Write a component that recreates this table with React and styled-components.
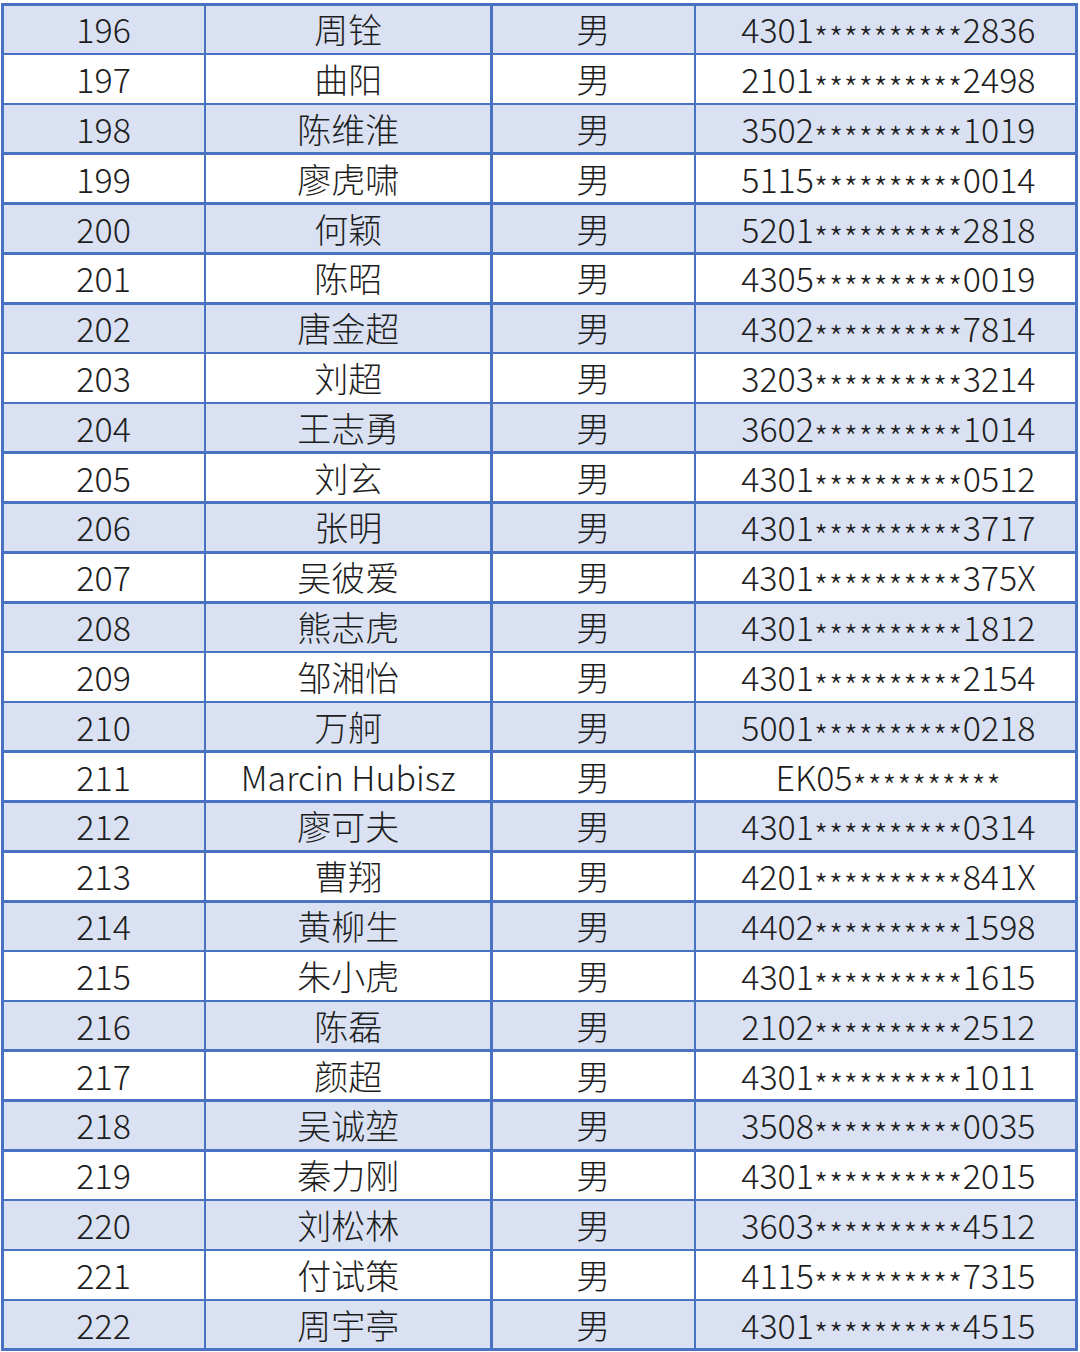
import React from "react";
import styled, { createGlobalStyle } from "styled-components";

const Global = createGlobalStyle`
  html, body { margin: 0; padding: 0; background: #ffffff; }
  body { font-family: "Noto Sans CJK SC", "Noto Sans", sans-serif; }
`;

const Page = styled.div`
  width: 1080px;
  height: 1352px;
  padding: 3px 2px 1px 1px;
  box-sizing: border-box;
`;

const Table = styled.div`
  display: flex;
  flex-direction: column;
  gap: 2.6px;
  height: 100%;
  padding: 2.6px;
  box-sizing: border-box;
  background: #4a72c2;
`;

const Row = styled.div`
  flex: 1;
  display: grid;
  grid-template-columns: 200px 284px 201px 1fr;
  gap: 2.6px;
`;

const Cell = styled.div`
  display: flex;
  align-items: center;
  justify-content: center;
  background: ${(p) => (p.$band ? "#d9e1f2" : "#ffffff")};
  color: #1e1e1e;
  font-size: 34px;
  font-weight: 300;
  line-height: 1;
  white-space: nowrap;
`;

const IdText = styled.span`
  display: inline-block;
  padding-left: 5px;
  line-height: 1;
`;

const Stars = styled.span`
  display: inline-block;
  font-size: 32px;
  letter-spacing: 0.7px;
  line-height: 0.5;
  transform: translateY(0.26em);
`;

const data = [
  ["196", "周铨", "4301", "2836"],
  ["197", "曲阳", "2101", "2498"],
  ["198", "陈维淮", "3502", "1019"],
  ["199", "廖虎啸", "5115", "0014"],
  ["200", "何颖", "5201", "2818"],
  ["201", "陈昭", "4305", "0019"],
  ["202", "唐金超", "4302", "7814"],
  ["203", "刘超", "3203", "3214"],
  ["204", "王志勇", "3602", "1014"],
  ["205", "刘玄", "4301", "0512"],
  ["206", "张明", "4301", "3717"],
  ["207", "吴彼爱", "4301", "375X"],
  ["208", "熊志虎", "4301", "1812"],
  ["209", "邹湘怡", "4301", "2154"],
  ["210", "万舸", "5001", "0218"],
  ["211", "Marcin Hubisz", "EK05", ""],
  ["212", "廖可夫", "4301", "0314"],
  ["213", "曹翔", "4201", "841X"],
  ["214", "黄柳生", "4402", "1598"],
  ["215", "朱小虎", "4301", "1615"],
  ["216", "陈磊", "2102", "2512"],
  ["217", "颜超", "4301", "1011"],
  ["218", "吴诚堃", "3508", "0035"],
  ["219", "秦力刚", "4301", "2015"],
  ["220", "刘松林", "3603", "4512"],
  ["221", "付试策", "4115", "7315"],
  ["222", "周宇亭", "4301", "4515"],
];

export default function App() {
  return (
    <Page>
      <Global />
      <Table>
        {data.map(([no, name, pre, post], i) => {
          const band = i % 2 === 0;
          return (
            <Row key={no}>
              <Cell $band={band}>{no}</Cell>
              <Cell $band={band}>{name}</Cell>
              <Cell $band={band}>男</Cell>
              <Cell $band={band}>
                <IdText>
                  {pre}
                  <Stars>**********</Stars>
                  {post}
                </IdText>
              </Cell>
            </Row>
          );
        })}
      </Table>
    </Page>
  );
}
